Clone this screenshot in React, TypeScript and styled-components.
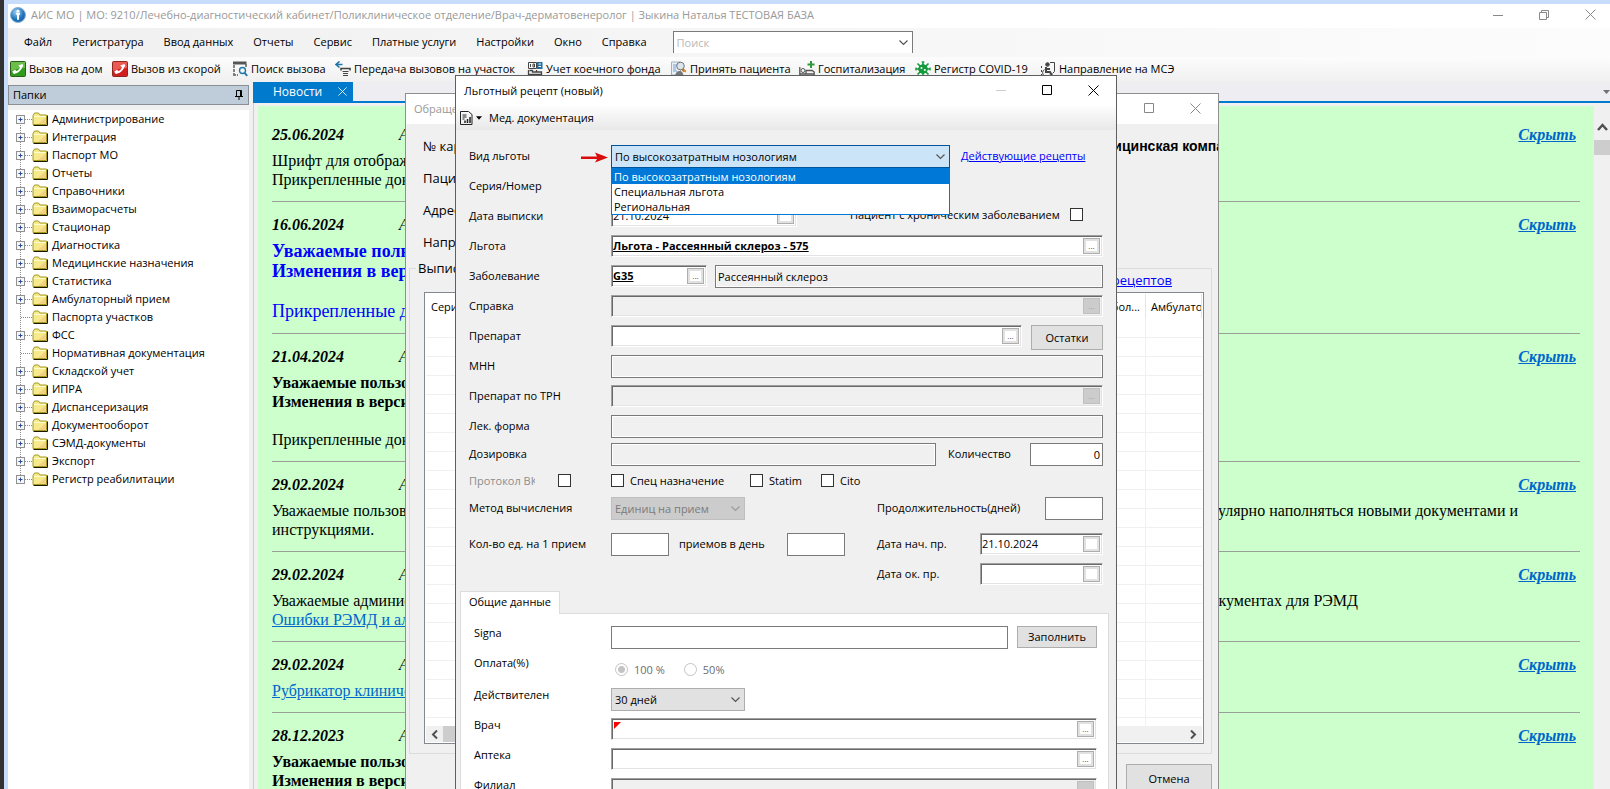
import React from 'react';
import styled, { createGlobalStyle, css } from 'styled-components';

const Global = createGlobalStyle`
  * { box-sizing: border-box; }
  body { margin: 0; background: #f0f0f0; overflow: hidden; }
  body, button, input, select { font-family: "Open Sans", sans-serif; font-size: 11px; color: #000; }
  button, input, select { margin: 0; border-radius: 0; }
`;

/* ---------- main window ---------- */

const Desktop = styled.div`
  position: relative;
  height: 100vh;
  overflow: hidden;
  border-left: 4px solid #333;
`;
const MainWindow = styled.div`
  display: flex;
  flex-direction: column;
  height: 100%;
  border-top: 4px solid #c8dcfc;
  border-left: 4px solid #c8dcfc;
  background: #f0f0f0;
`;
const TitleBar = styled.header`
  display: flex;
  align-items: center;
  height: 24px;
  flex: none;
  padding: 0 12px 3px 2px;
  background: #fff;
  color: #999;
`;
const Title = styled.h1`
  flex: 1;
  margin: 0 0 0 5px;
  font-size: 11px;
  font-weight: 400;
`;
const WinButtons = styled.div<{ $gap?: number }>`
  display: flex;
  gap: ${(p) => p.$gap ?? 30}px;
`;
const WinButton = styled.button<{ $color?: string }>`
  display: flex;
  align-items: center;
  justify-content: center;
  width: 16px;
  height: 16px;
  padding: 0;
  border: 0;
  background: transparent;
  color: ${(p) => p.$color ?? '#888'};
`;
const MenuBar = styled.nav`
  display: flex;
  align-items: center;
  height: 29px;
  flex: none;
  padding-left: 6px;
  background: linear-gradient(90deg, #f0f0f0, #f5f5f5 40%, #fcfcfc);
`;
const MenuItem = styled.button`
  padding: 0 10px 2px;
  border: 0;
  background: transparent;
  font-size: 11px;
  line-height: 20px;
`;
const Search = styled.label`
  display: flex;
  align-items: center;
  align-self: flex-end;
  width: 240px;
  height: 22px;
  margin: 0 0 4px 16px;
  padding-right: 4px;
  border: 1px solid #7a7a7a;
  border-bottom: 0;
  background: #fff;
`;
const SearchInput = styled.input`
  flex: 1;
  min-width: 0;
  border: 0;
  padding: 0 3px;
  outline: 0;
  background: transparent;
  &::placeholder { color: #b8b8b8; opacity: 1; }
`;
const ToolBar = styled.div`
  display: flex;
  height: 25px;
  flex: none;
  padding: 0 0 2px 2px;
  background: linear-gradient(#fcfcfc, #f0f0f0);
`;
const ToolButton = styled.button<{ $w: number }>`
  display: flex;
  align-items: center;
  gap: 3px;
  width: ${(p) => p.$w}px;
  padding: 0;
  border: 0;
  background: transparent;
  white-space: nowrap;
  svg { flex: none; }
`;
const Work = styled.div`
  display: flex;
  flex: 1;
  min-height: 0;
`;

/* ---------- folder tree ---------- */

const Side = styled.aside`
  display: flex;
  flex-direction: column;
  width: 245px;
  flex: none;
  padding: 3px 4px 0 0;
`;
const SideHeader = styled.h2`
  display: flex;
  align-items: center;
  justify-content: space-between;
  height: 20px;
  flex: none;
  margin: 0 0 5px;
  padding: 0 5px 1px 4px;
  border: 1px solid #8a8f96;
  background: #bfcddb;
  font-size: 11px;
  font-weight: 400;
`;
const Tree = styled.ul`
  flex: 1;
  margin: 0;
  padding: 0 0 0 8px;
  background: #fff;
  list-style: none;
`;
const TreeItem = styled.li`
  display: flex;
  align-items: center;
  height: 18px;
  line-height: 18px;
`;
const TreeLabel = styled.span`
  margin-left: 4px;
`;

/* ---------- news ---------- */

const Main = styled.main`
  display: flex;
  flex-direction: column;
  flex: 1;
  min-width: 0;
`;
const TabStrip = styled.div`
  display: flex;
  align-items: center;
  justify-content: space-between;
  height: 21px;
  flex: none;
  border-bottom: 2px solid #007acc;
  background: #eeeef2;
`;
const NewsTab = styled.button`
  display: flex;
  align-items: center;
  justify-content: space-between;
  align-self: stretch;
  width: 100px;
  padding: 0 6px 1px 20px;
  border: 0;
  background: #007acc;
  color: #fff;
  font-size: 12px;
`;
const Pane = styled.div`
  display: flex;
  flex: 1;
  min-height: 0;
  padding: 3px 0 0 4px;
  border-left: 1px solid #cccedb;
`;
const NewsList = styled.div`
  flex: 1;
  min-width: 0;
  overflow: hidden;
  padding: 6px 14px 0;
  background: #ccffcc;
  font-family: "Liberation Serif", serif;
  font-size: 16px;
`;
const Article = styled.article`
  padding: 13px 0 12px;
  border-bottom: 1px solid #9a9f9a;
`;
const ArticleHead = styled.header`
  display: flex;
  height: 20px;
  margin-bottom: 6px;
  padding-right: 4px;
  line-height: 20px;
  font-style: italic;
`;
const ArticleDate = styled.time`
  width: 127px;
  font-weight: 700;
`;
const Hide = styled.a`
  margin-left: auto;
  color: #0066cc;
  font-weight: 700;
`;
const Line = styled.p<{ $bold?: boolean; $big?: boolean }>`
  display: flex;
  justify-content: space-between;
  min-height: ${(p) => (p.$big ? 20 : 19)}px;
  margin: 0;
  line-height: ${(p) => (p.$big ? 20 : 19)}px;
  font-weight: ${(p) => (p.$bold ? 700 : 400)};
  white-space: nowrap;
  ${(p) => p.$big && css`
    font-size: 18px;
    color: #0000ff;
  `}
  a { color: #0066cc; }
`;
const LineEnd = styled.span<{ $right: number }>`
  padding-right: ${(p) => p.$right}px;
`;
const VScroll = styled.div`
  display: flex;
  flex-direction: column;
  align-items: center;
  gap: 9px;
  width: 16px;
  flex: none;
  padding-top: 17px;
  background: #f0f0f0;
`;
const VThumb = styled.div`
  width: 16px;
  height: 15px;
  background: #cdcdcd;
`;

/* ---------- floating windows ---------- */

const Floating = styled.section<{ $x: number; $y: number; $w: number; $line: string }>`
  position: absolute;
  left: ${(p) => p.$x - 4}px;
  top: ${(p) => p.$y}px;
  bottom: 0;
  display: flex;
  flex-direction: column;
  width: ${(p) => p.$w}px;
  overflow: hidden;
  border: 1px solid ${(p) => p.$line};
  border-bottom: 0;
  background: #f0f0f0;
`;
const WindowTitle = styled.header<{ $muted?: boolean }>`
  display: flex;
  align-items: center;
  justify-content: space-between;
  height: 30px;
  flex: none;
  padding: 0 15px 2px 8px;
  background: #fff;
  color: ${(p) => (p.$muted ? '#999' : '#000')};
`;
const VisitBody = styled.div`
  display: flex;
  flex-direction: column;
  flex: 1;
  padding: 6px 6px 0 3px;
`;
const VisitRow = styled.div`
  display: flex;
  align-items: center;
  height: 32px;
  flex: none;
  padding-left: 14px;
  font-size: 13px;
  white-space: nowrap;
`;
const VisitLabel = styled.span`
  width: 662px;
  flex: none;
`;
const Clinic = styled.b`
  font-family: "Liberation Sans", sans-serif;
  font-size: 14px;
`;
const Group = styled.fieldset`
  margin: 1px 0 0;
  min-width: 0;
  padding: 0 7px 9px 14px;
  border: 1px solid #dcdcdc;
  legend {
    margin-left: -8px;
    padding: 0 2px;
    font-size: 13px;
    line-height: 18px;
  }
`;
const GroupLink = styled.div`
  display: flex;
  justify-content: flex-end;
  height: 15px;
  padding-right: 32px;
  font-size: 13px;
  line-height: 6px;
  a { color: #0000ff; }
`;
const ListFrame = styled.div`
  border: 1px solid #828790;
  padding: 1px;
  background: #fff;
`;
const ListClip = styled.div`
  height: 432px;
  overflow: hidden;
`;
const ListTable = styled.table`
  width: 100%;
  table-layout: fixed;
  border-collapse: collapse;
  th {
    height: 24px;
    padding: 0 5px;
    border-right: 1px solid #e5e5e5;
    font-weight: 400;
    text-align: left;
    white-space: nowrap;
    overflow: hidden;
  }
  th:first-child { border-right: 0; }
  th:nth-child(2) { text-align: right; }
  td {
    height: 19px;
    padding: 0;
    border-bottom: 1px solid #f0f0f0;
  }
  td:nth-child(2) { border-right: 1px solid #f0f0f0; }
`;
const HScroll = styled.div`
  display: flex;
  align-items: center;
  height: 16px;
  background: #f0f0f0;
  svg { margin: 0 5px; }
`;
const HThumb = styled.div`
  width: 400px;
  height: 16px;
  margin-right: auto;
  background: #cdcdcd;
`;
const VisitFooter = styled.div`
  display: flex;
  justify-content: flex-end;
  padding-top: 10px;
`;
const PushButton = styled.button<{ $w: number; $h: number }>`
  width: ${(p) => p.$w}px;
  height: ${(p) => p.$h}px;
  padding: 0 0 1px;
  border: 1px solid #adadad;
  background: #e1e1e1;
  flex: none;
`;

/* ---------- prescription form ---------- */

const FormTools = styled.div`
  display: flex;
  align-items: center;
  gap: 3px;
  height: 24px;
  flex: none;
  padding: 0 0 1px 4px;
  background: linear-gradient(#fdfdfd, #e8e8e8);
`;
const FlatButton = styled.button`
  display: flex;
  align-items: center;
  gap: 3px;
  padding: 0 4px 0 0;
  border: 0;
  background: transparent;
`;
const Form = styled.form`
  display: flex;
  flex-direction: column;
  flex: 1;
  padding: 15px 7px 0 4px;
`;
const Row = styled.div<{ $h?: number }>`
  display: flex;
  align-items: flex-start;
  height: ${(p) => p.$h ?? 30}px;
  flex: none;
  padding: 0 6px 0 9px;
`;
const Label = styled.label<{ $w?: number; $muted?: boolean }>`
  width: ${(p) => p.$w ?? 142}px;
  flex: none;
  line-height: 21px;
  white-space: nowrap;
  ${(p) => p.$muted && css`color: #8d8d8d;`}
`;
const ClippedLabel = styled(Label)`
  width: 66px;
  margin-right: 23px;
  overflow: hidden;
  line-height: 20px;
`;
const Spacer = styled.span`
  flex: 1;
`;
const Gap = styled.span<{ $w: number }>`
  width: ${(p) => p.$w}px;
  flex: none;
`;
const Plain = styled.input<{ $w?: number }>`
  ${(p) => (p.$w ? css`width: ${p.$w}px; flex: none;` : css`flex: 1; min-width: 0;`)}
  height: 23px;
  padding: 0 2px 1px;
  border: 1px solid #7a7a7a;
  background: #fff;
  outline: 0;
  &:read-only {
    background: #f0f0f0;
    box-shadow: inset 0 0 0 1px #fff;
  }
`;
const NumberBox = styled(Plain)`
  text-align: right;
`;
const Sunken = styled.span<{ $w?: number; $off?: boolean }>`
  display: flex;
  align-items: center;
  ${(p) => (p.$w ? css`width: ${p.$w}px; flex: none;` : css`flex: 1; min-width: 0;`)}
  height: 22px;
  padding: 0 2px 0 1px;
  border: 1px solid;
  border-color: #a0a0a0 #fff #fff #a0a0a0;
  box-shadow: inset 1px 1px 0 #696969, inset -1px -1px 0 #e3e3e3;
  background: ${(p) => (p.$off ? '#f0f0f0' : '#fff')};
`;
const SunkenInput = styled.input<{ $strong?: boolean }>`
  flex: 1;
  min-width: 0;
  padding: 0 0 2px;
  border: 0;
  outline: 0;
  background: transparent;
  ${(p) => p.$strong && css`
    font-weight: 700;
    text-decoration: underline;
  `}
`;
const Dots = styled.button`
  width: 17px;
  height: 16px;
  flex: none;
  padding: 0;
  border: 1px solid #adadad;
  background: #fff;
  box-shadow: inset 0 0 0 2px #e1e1e1;
  color: #444;
  font-size: 8px;
  line-height: 14px;
  &:disabled {
    border-color: #bfbfbf;
    background: #ccc;
    box-shadow: none;
    color: #a0a0a0;
  }
`;
const SelectWrap = styled.span<{ $w: number }>`
  position: relative;
  display: block;
  width: ${(p) => p.$w}px;
  height: 23px;
  flex: none;
  > svg {
    position: absolute;
    right: 5px;
    top: 8px;
    pointer-events: none;
  }
`;
const Select = styled.select<{ $open?: boolean }>`
  width: 100%;
  height: 23px;
  padding: 0 3px;
  appearance: none;
  outline: 0;
  border: 1px solid ${(p) => (p.$open ? '#005499' : '#adadad')};
  background: ${(p) => (p.$open ? '#cce4f7' : '#e1e1e1')};
  color: #000;
  &:disabled {
    border-color: #bfbfbf;
    background: #ccc;
    color: #7b7b7b;
    opacity: 1;
  }
`;
const Options = styled.ul`
  position: absolute;
  z-index: 2;
  top: 23px;
  left: 0;
  right: 0;
  margin: 0;
  padding: 0;
  border: 1px solid #0078d7;
  background: #fff;
  list-style: none;
`;
const Option = styled.li<{ $active?: boolean }>`
  height: 15px;
  padding-left: 2px;
  line-height: 15px;
  background: ${(p) => (p.$active ? '#0078d7' : '#fff')};
  color: ${(p) => (p.$active ? '#fff' : '#000')};
`;
const Arrow = styled.svg`
  margin: 7px 3px 0 -30px;
  flex: none;
`;
const FormLink = styled.a`
  margin-left: 11px;
  line-height: 21px;
  color: #0000ff;
`;
const Tick = styled.input.attrs({ type: 'checkbox' })`
  width: 13px;
  height: 13px;
  flex: none;
  margin: 3px 6px 0 0;
  appearance: none;
  border: 1px solid #333;
  background: #fff;
`;
const TickLabel = styled.label<{ $w?: number }>`
  width: ${(p) => (p.$w ? `${p.$w}px` : 'auto')};
  flex: none;
  line-height: 20px;
  white-space: nowrap;
`;
const TabHead = styled.button`
  position: relative;
  align-self: flex-start;
  width: 100px;
  height: 23px;
  flex: none;
  margin-bottom: -1px;
  padding: 0 0 3px;
  border: 1px solid #dcdcdc;
  border-bottom: 0;
  background: #fff;
`;
const TabPanel = styled.div`
  flex: 1;
  padding: 12px 5px 0 4px;
  border: 1px solid #dcdcdc;
  border-bottom: 0;
  background: #fff;
`;
const PanelLabel = styled(Label)`
  width: 137px;
  line-height: 14px;
`;
const Radios = styled.div`
  display: flex;
  align-items: center;
  height: 26px;
  padding: 0 0 0 4px;
  color: #6d6d6d;
`;
const Radio = styled.input.attrs({ type: 'radio' })`
  width: 13px;
  height: 13px;
  margin: 0 6px 0 0;
  appearance: none;
  border: 1px solid #c4c4c4;
  border-radius: 50%;
  background: #fff;
  &:checked { background: radial-gradient(circle, #c4c4c4 0 3px, #fff 4px); }
`;
const RadioLabel = styled.label`
  margin-right: 19px;
`;

/* ---------- drawings ---------- */

const Cross = ({ s = 11 }: { s?: number }) => (
  <svg width={s} height={s} viewBox="0 0 11 11" stroke="currentColor" fill="none"><path d="M.5.5l10 10M10.5.5l-10 10" /></svg>
);
const Dash = () => (
  <svg width="10" height="10" stroke="currentColor"><path d="M0 5.5h10" /></svg>
);
const Square = () => (
  <svg width="10" height="10" stroke="currentColor" fill="none"><path d="M.5.5h9v9h-9z" /></svg>
);
const Restore = () => (
  <svg width="10" height="10" stroke="currentColor" fill="none"><path d="M.5 2.5h7v7h-7zM2.5 2.5v-2h7v7h-2" /></svg>
);
const Chevron = ({ c = '#555' }: { c?: string }) => (
  <svg width="9" height="7" viewBox="0 0 9 7" stroke={c} fill="none" strokeWidth="1.2"><path d="M.5 1.5l4 4 4-4" /></svg>
);
const InfoIcon = () => (
  <svg width="16" height="16" viewBox="0 0 16 16">
    <defs><radialGradient id="info" cx=".4" cy=".3"><stop stopColor="#9cd4f7" /><stop offset="1" stopColor="#1d6fb8" /></radialGradient></defs>
    <circle cx="8" cy="8" r="7.5" fill="url(#info)" stroke="#8ab0d0" />
    <circle cx="8" cy="4.2" r="1.4" fill="#fff" />
    <path d="M6 6.8h4M8 6.8v6" stroke="#fff" strokeWidth="2" />
  </svg>
);
const PhoneIcon = ({ red }: { red?: boolean }) => (
  <svg width="16" height="16" viewBox="0 0 16 16">
    <rect x=".5" y=".5" width="15" height="15" rx="1" fill={red ? '#cf1f1f' : '#2f9a1c'} stroke={red ? '#8c2a20' : '#2c5e1c'} />
    <path d="M1 1h14v6Q8 7 1 10z" fill={red ? '#ea5a54' : '#6cc04a'} />
    <path d="M3 11.200q6 1.500 9-6.700" stroke="#fff" strokeWidth="2" fill="none" />
    <path d="M2 10.800l3-2 2 1.800-2.500 2.400zM8.300 4.500l4-1.500 1 1.500-2.300 3z" fill="#fff" />
  </svg>
);
const FindIcon = () => (
  <svg width="16" height="16" viewBox="0 0 16 16" fill="none" stroke="#555">
    <path d="M1 2h13.500" strokeWidth="3" /><path d="M2 4v9M14 3v3M1 14h5" strokeDasharray="3 1" strokeWidth="1.4" />
    <circle cx="10.500" cy="9.500" r="3" stroke="#1f77a8" strokeWidth="1.400" /><path d="M12.600 11.800l2.600 3" stroke="#1f77a8" strokeWidth="1.800" />
  </svg>
);
const TransferIcon = () => (
  <svg width="16" height="16" viewBox="0 0 16 16" fill="none">
    <path d="M4.5.5L1 3.500l3.500 3M1 3.500h6.500" stroke="#1f77a8" strokeWidth="1.600" />
    <path d="M6 9.500V7.500h9v2" stroke="#444" strokeWidth="1.600" /><path d="M7.500 10.500h6M8 12.500h5M8 14.500h5" stroke="#444" />
  </svg>
);
const BedsIcon = () => (
  <svg width="16" height="16" viewBox="0 0 16 16" fill="none" stroke="#444">
    <path d="M1.500 1.500h8v6h-8zM3.500 3v3M6 3h1.500v3H6z" /><path d="M10 1h5.500v7H10z" fill="#1f6fa5" stroke="none" />
    <path d="M11.500 3h2.500M11.500 5.500h2.500" stroke="#fff" />
    <path d="M1.500 9v6M1.500 13.500h13V11h-9v-1.500h-3M14.500 13v2M9.500 9v2" strokeWidth="1.300" />
  </svg>
);
const AdmitIcon = () => (
  <svg width="16" height="16" viewBox="0 0 16 16">
    <path d="M.5 1h9v13h-9z" fill="#e8f0f8" stroke="#9fb0c4" /><path d="M2 4h5M2 6h3M2 8h3M2 10h4" stroke="#7aa0d0" />
    <path d="M4 15q1-5 4.500-5t4 5z" fill="#777" /><circle cx="9.500" cy="5" r="3.800" fill="#dbe6ee" stroke="#777" />
    <path d="M11.500 8l2 2.500" stroke="#b56a20" strokeWidth="2.600" /><path d="M12.500 9.500l2.500 1" stroke="#e09030" strokeWidth="2" />
  </svg>
);
const HospitalIcon = () => (
  <svg width="16" height="16" viewBox="0 0 16 16" fill="none" stroke="#555">
    <path d="M.8 6v9M.8 13h14.400M15.200 15v-4l-2-1.500H7V13" strokeWidth="1.300" /><circle cx="4" cy="9.500" r="2" />
    <path d="M12 0v7M8.500 3.500h7" stroke="#2f9a3c" strokeWidth="2" />
  </svg>
);
const VirusIcon = () => (
  <svg width="16" height="16" viewBox="0 0 16 16" stroke="#129a3a">
    <path d="M8 .5v15M.5 8h15M2.500 2.500l11 11M13.500 2.500l-11 11" strokeWidth="1.600" />
    <path d="M6.500 1h3M6.500 15h3M1 6.500v3M15 6.500v3" strokeWidth="1.200" />
    <circle cx="8" cy="8" r="4.300" fill="#129a3a" /><circle cx="6.500" cy="7" r="1" fill="#fff" stroke="none" /><circle cx="9.800" cy="9" r="1" fill="#fff" stroke="none" />
  </svg>
);
const ExpertIcon = () => (
  <svg width="16" height="16" viewBox="0 0 16 16" fill="none" stroke="#444">
    <circle cx="7.500" cy="3.500" r="1.800" fill="#444" /><path d="M6 6v5h4l2 3.500M6 8h4" strokeWidth="2" />
    <path d="M4.500 8.500a3.800 3.800 0 1 0 5 5.500" /><path d="M10 1.500h4.500v9l-2 2" /><path d="M1.500 5v9" strokeDasharray="2 2" />
  </svg>
);
const FolderIcon = () => (
  <svg width="16" height="14" viewBox="0 0 16 14">
    <path d="M1 3.500L2.500 1h4L8 3h6.500v9.500H1z" fill="#f7ea8c" stroke="#a39a20" />
    <path d="M2 4.500h12" stroke="#fffbd0" /><path d="M14 5v7H6z" fill="#f5cf85" /><path d="M15.500 3.500v10H1.500" fill="none" stroke="#1a1a00" />
  </svg>
);
const Branch = ({ leaf, first, last }: { leaf?: boolean; first?: boolean; last?: boolean }) => (
  <svg width="16" height="18" viewBox="0 0 16 18" fill="none">
    <path d={`M4.500 ${first ? 9 : 0}V${last ? 9 : 18}M5 9.500h11`} stroke="#8a8a8a" strokeDasharray="1 1" />
    {!leaf && <><rect x=".5" y="5.500" width="8" height="8" fill="#f6f6f6" stroke="#919191" /><path d="M2.500 9.500h4M4.500 7.500v4" stroke="#2b4a9c" /></>}
  </svg>
);
const PinIcon = () => (
  <svg width="8" height="10" viewBox="0 0 8 10" fill="none" stroke="#000"><path d="M1.500 6V.5h4V6M0 6.500h8M4 7v3M5.500.5V6" /><path d="M5.500.5h1V6" /></svg>
);
const ReportIcon = () => (
  <svg width="13" height="14" viewBox="0 0 13 14" fill="none" stroke="#222"><path d="M.5.500h8l3.500 3v10H.5z" /><path d="M2.500 4h4M2.500 6h4M2.500 8h2" /><path d="M5 12V9.500M7.500 12V8M10 12V6" strokeWidth="1.500" /></svg>
);
const Caret = ({ c = '#000', w = 7 }: { c?: string; w?: number }) => (
  <svg width={w} height="4" viewBox="0 0 7 4"><path d="M0 0h7L3.500 4z" fill={c} /></svg>
);
const Flag = () => (
  <svg width="8" height="14" viewBox="0 0 8 14"><path d="M1 0h7L1 7z" fill="#f00" /></svg>
);

/* ---------- data ---------- */

const menu = ['Файл', 'Регистратура', 'Ввод данных', 'Отчеты', 'Сервис', 'Платные услуги', 'Настройки', 'Окно', 'Справка'];
const tools: [string, number, React.ReactNode][] = [
  ['Вызов на дом', 102, <PhoneIcon />],
  ['Вызов из скорой', 120, <PhoneIcon red />],
  ['Поиск вызова', 103, <FindIcon />],
  ['Передача вызовов на участок', 192, <TransferIcon />],
  ['Учет коечного фонда', 144, <BedsIcon />],
  ['Принять пациента', 128, <AdmitIcon />],
  ['Госпитализация', 116, <HospitalIcon />],
  ['Регистр COVID-19', 125, <VirusIcon />],
  ['Направление на МСЭ', 150, <ExpertIcon />],
];
const folders = [
  'Администрирование', 'Интеграция', 'Паспорт МО', 'Отчеты', 'Справочники', 'Взаиморасчеты', 'Стационар',
  'Диагностика', 'Медицинские назначения', 'Статистика', 'Амбулаторный прием', 'Паспорта участков', 'ФСС',
  'Нормативная документация', 'Складской учет', 'ИПРА', 'Диспансеризация', 'Документооборот',
  'СЭМД-документы', 'Экспорт', 'Регистр реабилитации',
];
const leaves = ['Паспорта участков', 'Нормативная документация'];

type NewsLine = { t: string; bold?: boolean; big?: boolean; link?: boolean; end?: string; right?: number };
const news: { date: string; lines: NewsLine[] }[] = [
  { date: '25.06.2024', lines: [{ t: 'Шрифт для отображения' }, { t: 'Прикрепленные документы' }] },
  {
    date: '16.06.2024', lines: [
      { t: 'Уважаемые пользователи', bold: true, big: true }, { t: 'Изменения в версии', bold: true, big: true },
      { t: '', big: true }, { t: 'Прикрепленные документы', big: true }],
  },
  {
    date: '21.04.2024', lines: [
      { t: 'Уважаемые пользователи', bold: true }, { t: 'Изменения в версии', bold: true },
      { t: '' }, { t: 'Прикрепленные документы' }],
  },
  {
    date: '29.02.2024', lines: [
      { t: 'Уважаемые пользователи', end: 'регулярно наполняться новыми документами и', right: 62 }, { t: 'инструкциями.' }],
  },
  {
    date: '29.02.2024', lines: [
      { t: 'Уважаемые администраторы', end: 'документах для РЭМД', right: 222 }, { t: 'Ошибки РЭМД и алгоритмы', link: true }],
  },
  { date: '29.02.2024', lines: [{ t: 'Рубрикатор клинический', link: true }] },
  { date: '28.12.2023', lines: [{ t: 'Уважаемые пользователи', bold: true }, { t: 'Изменения в версии', bold: true }] },
];

/* ---------- form parts ---------- */

type LookupProps = { id: string; w?: number; value?: string; strong?: boolean; off?: boolean; blank?: boolean; flag?: boolean };
const Lookup = ({ id, w, value = '', strong, off, blank, flag }: LookupProps) => (
  <Sunken $w={w} $off={off}>
    {flag && <Flag />}
    <SunkenInput id={id} defaultValue={value} $strong={strong} disabled={off} />
    <Dots type="button" disabled={off} aria-label="Выбрать">{blank ? '' : '...'}</Dots>
  </Sunken>
);

const VisitWindow = () => (
  <Floating $x={405} $y={93} $w={814} $line="#8f8f8f">
    <WindowTitle $muted>
      <span>Обращение</span>
      <WinButtons $gap={30}>
        <WinButton aria-label="Развернуть"><Square /></WinButton>
        <WinButton aria-label="Закрыть"><Cross /></WinButton>
      </WinButtons>
    </WindowTitle>
    <VisitBody>
      <VisitRow><VisitLabel>№ карты</VisitLabel><Clinic>Медицинская компания</Clinic></VisitRow>
      <VisitRow>Пациент</VisitRow>
      <VisitRow>Адрес</VisitRow>
      <VisitRow>Направление</VisitRow>
      <Group>
        <legend>Выписанные</legend>
        <GroupLink><a href="#recipes">рецептов</a></GroupLink>
        <ListFrame>
          <ListClip>
            <ListTable>
              <colgroup><col /><col width="60" /><col width="56" /></colgroup>
              <thead><tr><th>Серия</th><th>Забол...</th><th>Амбулаторная</th></tr></thead>
              <tbody>{Array.from({ length: 22 }, (_, i) => <tr key={i}><td /><td /><td /></tr>)}</tbody>
            </ListTable>
          </ListClip>
          <HScroll>
            <svg width="7" height="9" viewBox="0 0 7 9" fill="none" stroke="#505050" strokeWidth="2"><path d="M6 .5l-4 4 4 4" /></svg>
            <HThumb />
            <svg width="7" height="9" viewBox="0 0 7 9" fill="none" stroke="#505050" strokeWidth="2"><path d="M1 .5l4 4-4 4" /></svg>
          </HScroll>
        </ListFrame>
      </Group>
      <VisitFooter><PushButton $w={86} $h={30}>Отмена</PushButton></VisitFooter>
    </VisitBody>
  </Floating>
);

const RecipeWindow = () => (
  <Floating $x={455} $y={75} $w={662} $line="#5f5f5f">
    <WindowTitle>
      <span>Льготный рецепт (новый)</span>
      <WinButtons $gap={30}>
        <WinButton $color="#ccc" aria-label="Свернуть"><Dash /></WinButton>
        <WinButton $color="#000" aria-label="Развернуть"><Square /></WinButton>
        <WinButton $color="#000" aria-label="Закрыть"><Cross /></WinButton>
      </WinButtons>
    </WindowTitle>
    <FormTools>
      <FlatButton aria-label="Отчеты"><ReportIcon /><Caret w={6} /></FlatButton>
      <FlatButton>Мед. документация</FlatButton>
    </FormTools>
    <Form>
      <Row>
        <Label htmlFor="kind">Вид льготы</Label>
        <Arrow width="27" height="11" viewBox="0 0 27 11"><path d="M0 4.500h16L14 .5 27 5.500 14 10.500l2-3.500H0z" fill="#d90b0b" /></Arrow>
        <SelectWrap $w={339}>
          <Select id="kind" $open defaultValue="a"><option value="a">По высокозатратным нозологиям</option></Select>
          <Chevron />
          <Options role="listbox">
            <Option role="option" $active>По высокозатратным нозологиям</Option>
            <Option role="option">Специальная льгота</Option>
            <Option role="option">Региональная</Option>
          </Options>
        </SelectWrap>
        <FormLink href="#active">Действующие рецепты</FormLink>
      </Row>
      <Row><Label as="span">Серия/Номер</Label></Row>
      <Row>
        <Label htmlFor="issued">Дата выписки</Label>
        <Lookup id="issued" w={186} value="21.10.2024" blank />
        <Spacer />
        <TickLabel htmlFor="chronic" $w={220}>Пациент с хроническим заболеванием</TickLabel>
        <Tick id="chronic" />
        <Gap $w={14} />
      </Row>
      <Row><Label htmlFor="benefit">Льгота</Label><Lookup id="benefit" value="Льгота - Рассеянный склероз - 575" strong /></Row>
      <Row>
        <Label htmlFor="disease">Заболевание</Label>
        <Lookup id="disease" w={96} value="G35" strong />
        <Spacer />
        <Plain $w={388} aria-label="Название заболевания" readOnly value="Рассеянный склероз" />
      </Row>
      <Row><Label htmlFor="cert">Справка</Label><Lookup id="cert" off /></Row>
      <Row>
        <Label htmlFor="drug">Препарат</Label>
        <Lookup id="drug" w={411} />
        <Spacer />
        <PushButton type="button" $w={72} $h={25}>Остатки</PushButton>
      </Row>
      <Row><Label htmlFor="inn">МНН</Label><Plain id="inn" readOnly /></Row>
      <Row><Label htmlFor="trn">Препарат по ТРН</Label><Lookup id="trn" off /></Row>
      <Row $h={28}><Label htmlFor="shape">Лек. форма</Label><Plain id="shape" readOnly /></Row>
      <Row $h={28}>
        <Label htmlFor="dose">Дозировка</Label>
        <Plain id="dose" $w={325} readOnly />
        <Spacer />
        <Label htmlFor="count" $w={82}>Количество</Label>
        <NumberBox id="count" $w={73} defaultValue="0" />
      </Row>
      <Row $h={26}>
        <ClippedLabel htmlFor="vk" $muted>Протокол ВК</ClippedLabel>
        <Tick id="vk" />
        <Spacer />
        <Tick id="special" /><TickLabel htmlFor="special" $w={120}>Спец назначение</TickLabel>
        <Tick id="statim" /><TickLabel htmlFor="statim" $w={52}>Statim</TickLabel>
        <Tick id="cito" /><TickLabel htmlFor="cito" $w={263}>Cito</TickLabel>
      </Row>
      <Row $h={36}>
        <Label htmlFor="method">Метод вычисления</Label>
        <SelectWrap $w={134}>
          <Select id="method" disabled defaultValue="u"><option value="u">Единиц на прием</option></Select>
          <Chevron c="#9a9a9a" />
        </SelectWrap>
        <Spacer />
        <Label htmlFor="days" $w={168}>Продолжительность(дней)</Label>
        <Plain id="days" $w={58} />
      </Row>
      <Row>
        <Label htmlFor="per">Кол-во ед. на 1 прием</Label>
        <Plain id="per" $w={58} />
        <Gap $w={10} />
        <Label htmlFor="times" $w={108}>приемов в день</Label>
        <Plain id="times" $w={58} />
        <Spacer />
        <Label htmlFor="from" $w={103}>Дата нач. пр.</Label>
        <Lookup id="from" w={123} value="21.10.2024" blank />
      </Row>
      <Row $h={28}>
        <Spacer />
        <Label htmlFor="to" $w={103}>Дата ок. пр.</Label>
        <Lookup id="to" w={123} blank />
      </Row>
      <TabHead type="button">Общие данные</TabHead>
      <TabPanel>
        <Row>
          <PanelLabel htmlFor="signa">Signa</PanelLabel>
          <Plain id="signa" />
          <Gap $w={9} />
          <PushButton type="button" $w={80} $h={22}>Заполнить</PushButton>
        </Row>
        <Row $h={32}>
          <PanelLabel as="span">Оплата(%)</PanelLabel>
          <Radios>
            <Radio id="p100" name="pay" defaultChecked disabled /><RadioLabel htmlFor="p100">100 %</RadioLabel>
            <Radio id="p50" name="pay" disabled /><RadioLabel htmlFor="p50">50%</RadioLabel>
          </Radios>
        </Row>
        <Row>
          <PanelLabel htmlFor="valid">Действителен</PanelLabel>
          <SelectWrap $w={134}>
            <Select id="valid" defaultValue="30"><option value="30">30 дней</option></Select>
            <Chevron />
          </SelectWrap>
        </Row>
        <Row><PanelLabel htmlFor="doctor">Врач</PanelLabel><Lookup id="doctor" flag /></Row>
        <Row><PanelLabel htmlFor="pharmacy">Аптека</PanelLabel><Lookup id="pharmacy" /></Row>
        <Row><PanelLabel htmlFor="branch">Филиал</PanelLabel><Lookup id="branch" off /></Row>
      </TabPanel>
    </Form>
  </Floating>
);

export default function App() {
  return (
    <Desktop>
      <Global />
      <MainWindow>
        <TitleBar>
          <InfoIcon />
          <Title>АИС МО | МО: 9210/Лечебно-диагностический кабинет/Поликлиническое отделение/Врач-дерматовенеролог | Зыкина Наталья ТЕСТОВАЯ БАЗА</Title>
          <WinButtons $gap={30}>
            <WinButton aria-label="Свернуть"><Dash /></WinButton>
            <WinButton aria-label="Восстановить"><Restore /></WinButton>
            <WinButton aria-label="Закрыть"><Cross /></WinButton>
          </WinButtons>
        </TitleBar>
        <MenuBar>
          {menu.map((m) => <MenuItem key={m}>{m}</MenuItem>)}
          <Search><SearchInput placeholder="Поиск" aria-label="Поиск" /><Chevron /></Search>
        </MenuBar>
        <ToolBar>
          {tools.map(([text, w, icon]) => <ToolButton key={text} $w={w}>{icon}{text}</ToolButton>)}
        </ToolBar>
        <Work>
          <Side>
            <SideHeader>Папки<PinIcon /></SideHeader>
            <Tree>
              {folders.map((f, i) => (
                <TreeItem key={f}>
                  <Branch leaf={leaves.includes(f)} first={i === 0} last={i === folders.length - 1} />
                  <FolderIcon />
                  <TreeLabel>{f}</TreeLabel>
                </TreeItem>
              ))}
            </Tree>
          </Side>
          <Main>
            <TabStrip><NewsTab>Новости<Cross s={9} /></NewsTab><Caret c="#717171" /></TabStrip>
            <Pane>
              <NewsList>
                {news.map((n, i) => (
                  <Article key={i}>
                    <ArticleHead><ArticleDate>{n.date}</ArticleDate><span>А</span><Hide href="#hide">Скрыть</Hide></ArticleHead>
                    {n.lines.map((l, j) => (
                      <Line key={j} $bold={l.bold} $big={l.big}>
                        {l.link ? <a href="#news">{l.t}</a> : <span>{l.t}</span>}
                        {l.end && <LineEnd $right={l.right ?? 0}>{l.end}</LineEnd>}
                      </Line>
                    ))}
                  </Article>
                ))}
              </NewsList>
              <VScroll>
                <svg width="11" height="8" viewBox="0 0 11 8" fill="none" stroke="#505050" strokeWidth="2.500"><path d="M1 7l4.500-5L10 7" /></svg>
                <VThumb />
              </VScroll>
            </Pane>
          </Main>
        </Work>
      </MainWindow>
      <VisitWindow />
      <RecipeWindow />
    </Desktop>
  );
}
